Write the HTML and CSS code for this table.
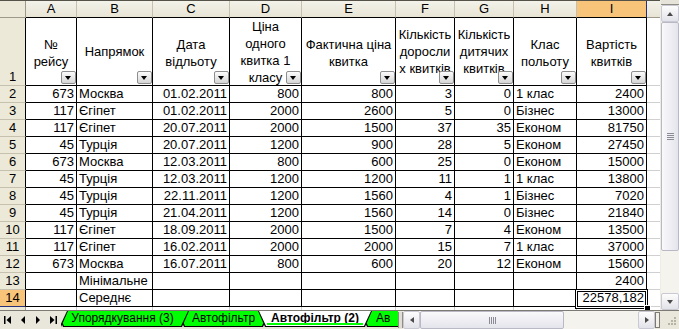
FILE: index.html
```html
<!DOCTYPE html>
<html>
<head>
<meta charset="utf-8">
<link rel="stylesheet" href="styles.css">
</head>
<body>
<div class="app">
  <div class="main">
    <div class="sheet">
      <div class="corner"></div>
      <div class="ch">A</div><div class="ch">B</div><div class="ch">C</div><div class="ch">D</div><div class="ch">E</div><div class="ch">F</div><div class="ch">G</div><div class="ch">H</div><div class="ch sel">I</div><div class="ch chj"></div>

      <div class="rh rh1">1</div>
      <div class="c hd two">№<br>рейсу<i class="dd"></i></div>
      <div class="c hd">Напрямок<i class="dd"></i></div>
      <div class="c hd two">Дата<br>відльоту<i class="dd"></i></div>
      <div class="c hd">Ціна<br>одного<br>квитка 1<br>класу<i class="dd"></i></div>
      <div class="c hd two">Фактична ціна<br>квитка<i class="dd"></i></div>
      <div class="c hd">Кількість<br>доросли<br>х квитків<i class="dd"></i></div>
      <div class="c hd">Кількість<br>дитячих<br>квитків<i class="dd"></i></div>
      <div class="c hd two">Клас<br>польоту<i class="dd"></i></div>
      <div class="c hd two">Вартість<br>квитків<i class="dd"></i></div>
      <div class="j"></div>

      <div class="rh">2</div><div class="c n">673</div><div class="c">Москва</div><div class="c n">01.02.2011</div><div class="c n">800</div><div class="c n">800</div><div class="c n">3</div><div class="c n">0</div><div class="c">1 клас</div><div class="c n">2400</div><div class="j"></div>
      <div class="rh">3</div><div class="c n">117</div><div class="c">Єгіпет</div><div class="c n">01.02.2011</div><div class="c n">2000</div><div class="c n">2600</div><div class="c n">5</div><div class="c n">0</div><div class="c">Бізнес</div><div class="c n">13000</div><div class="j"></div>
      <div class="rh">4</div><div class="c n">117</div><div class="c">Єгіпет</div><div class="c n">20.07.2011</div><div class="c n">2000</div><div class="c n">1500</div><div class="c n">37</div><div class="c n">35</div><div class="c">Економ</div><div class="c n">81750</div><div class="j"></div>
      <div class="rh">5</div><div class="c n">45</div><div class="c">Турція</div><div class="c n">20.07.2011</div><div class="c n">1200</div><div class="c n">900</div><div class="c n">28</div><div class="c n">5</div><div class="c">Економ</div><div class="c n">27450</div><div class="j"></div>
      <div class="rh">6</div><div class="c n">673</div><div class="c">Москва</div><div class="c n">12.03.2011</div><div class="c n">800</div><div class="c n">600</div><div class="c n">25</div><div class="c n">0</div><div class="c">Економ</div><div class="c n">15000</div><div class="j"></div>
      <div class="rh">7</div><div class="c n">45</div><div class="c">Турція</div><div class="c n">12.03.2011</div><div class="c n">1200</div><div class="c n">1200</div><div class="c n">11</div><div class="c n">1</div><div class="c">1 клас</div><div class="c n">13800</div><div class="j"></div>
      <div class="rh">8</div><div class="c n">45</div><div class="c">Турція</div><div class="c n">22.11.2011</div><div class="c n">1200</div><div class="c n">1560</div><div class="c n">4</div><div class="c n">1</div><div class="c">Бізнес</div><div class="c n">7020</div><div class="j"></div>
      <div class="rh">9</div><div class="c n">45</div><div class="c">Турція</div><div class="c n">21.04.2011</div><div class="c n">1200</div><div class="c n">1560</div><div class="c n">14</div><div class="c n">0</div><div class="c">Бізнес</div><div class="c n">21840</div><div class="j"></div>
      <div class="rh">10</div><div class="c n">117</div><div class="c">Єгіпет</div><div class="c n">18.09.2011</div><div class="c n">2000</div><div class="c n">1500</div><div class="c n">7</div><div class="c n">4</div><div class="c">Економ</div><div class="c n">13500</div><div class="j"></div>
      <div class="rh">11</div><div class="c n">117</div><div class="c">Єгіпет</div><div class="c n">16.02.2011</div><div class="c n">2000</div><div class="c n">2000</div><div class="c n">15</div><div class="c n">7</div><div class="c">1 клас</div><div class="c n">37000</div><div class="j"></div>
      <div class="rh">12</div><div class="c n">673</div><div class="c">Москва</div><div class="c n">16.07.2011</div><div class="c n">800</div><div class="c n">600</div><div class="c n">20</div><div class="c n">12</div><div class="c">Економ</div><div class="c n">15600</div><div class="j"></div>
      <div class="rh">13</div><div class="c"></div><div class="c">Мінімальне</div><div class="c"></div><div class="c"></div><div class="c"></div><div class="c"></div><div class="c"></div><div class="c"></div><div class="c n">2400</div><div class="j"></div>
      <div class="rh rsel">14</div><div class="c"></div><div class="c">Середнє</div><div class="c"></div><div class="c"></div><div class="c"></div><div class="c"></div><div class="c"></div><div class="c"></div><div class="c n">22578,182</div><div class="j"></div>

      <div class="rh rh15"></div><div class="g"></div><div class="g"></div><div class="g"></div><div class="g"></div><div class="g"></div><div class="g"></div><div class="g"></div><div class="g"></div><div class="g"></div><div class="g gl"></div>

      <div class="active"><i class="handle"></i></div>
    </div>
    <div class="vscroll">
      <div class="vsplit"></div>
      <div class="sbtn"><i class="ar up"></i></div>
      <div class="vtrack"><div class="vthumb"><i class="grip-h"></i></div></div>
      <div class="sbtn"><i class="ar down"></i></div>
    </div>
  </div>
  <div class="bottom">
    <div class="nav">
      <span class="nb"><svg width="8" height="8" viewBox="0 0 8 8"><rect x="0" y="0" width="1.5" height="8" fill="#000"/><polygon points="7,0 7,8 2.5,4" fill="#000"/></svg></span>
      <span class="nb"><svg width="6" height="8" viewBox="0 0 6 8"><polygon points="5,0 5,8 1,4" fill="#000"/></svg></span>
      <span class="nb"><svg width="6" height="8" viewBox="0 0 6 8"><polygon points="1,0 1,8 5,4" fill="#000"/></svg></span>
      <span class="nb"><svg width="8" height="8" viewBox="0 0 8 8"><polygon points="1,0 1,8 5.5,4" fill="#000"/><rect x="6.5" y="0" width="1.5" height="8" fill="#000"/></svg></span>
    </div>
    <div class="tabs">
      <div class="tab t0"></div>
      <div class="tab t1 green"><span>Упорядкування (3)</span></div>
      <div class="tab t2 green"><span>Автофільтр</span></div>
      <div class="tab t3 act"><span>Автофільтр (2)</span></div>
      <div class="tab t4 green"><span>Ав</span></div>
    </div>
    <div class="hsplit"></div>
    <div class="hscroll">
      <div class="sbtn hb"><i class="ar left"></i></div>
      <div class="hthumb"><i class="grip-v"></i></div>
      <div class="htrack"></div>
      <div class="sbtn hb"><i class="ar right"></i></div>
    </div>
    <div class="hsplit2"></div>
    <div class="sizegrip">
      <svg width="19" height="18" viewBox="0 0 19 18">
        <g fill="#b8b4a4">
          <rect x="14" y="6" width="2" height="2"/>
          <rect x="11" y="9" width="2" height="2"/><rect x="14" y="9" width="2" height="2"/>
          <rect x="8" y="12" width="2" height="2"/><rect x="11" y="12" width="2" height="2"/><rect x="14" y="12" width="2" height="2"/>
        </g>
      </svg>
    </div>
  </div>
</div>
</body>
</html>
```

FILE: styles.css
```css
html, body {
  margin: 0;
  padding: 0;
  background: #fff;
}
body {
  width: 679px;
  height: 329px;
  overflow: hidden;
  font-family: "Liberation Sans", Arial, sans-serif;
  font-size: 13px;
  color: #000;
}
.app {
  display: flex;
  flex-direction: column;
  width: 679px;
  height: 329px;
}
.main {
  display: flex;
  height: 310px;
}
.sheet {
  position: relative;
  width: 660px;
  height: 310px;
  box-sizing: border-box;
  border-top: 1px solid #55524a;
  display: grid;
  grid-template-columns: 26px 51px 76px 77px 72px 94px 59px 59px 63px 70px 13px;
  grid-template-rows: 17px 68px repeat(13, 17px) 3px;
  overflow: hidden;
}
.sheet > div {
  box-sizing: border-box;
  overflow: hidden;
  white-space: nowrap;
}
.corner {
  background: #ECE9D8;
  border-right: 1px solid #9d9a8b;
  border-bottom: 1px solid #9d9a8b;
}
.ch {
  background: linear-gradient(#F3F2EA, #E8E5D5);
  border-right: 1px solid #C5C1AE;
  border-bottom: 1px solid #000;
  text-align: center;
  line-height: 16px;
}
.ch.sel {
  background: #F8C47A;
  border-right: 1px solid #28307a;
}
.ch.chj {
  border-right: none;
  border-bottom-color: #9d9a8b;
}
.rh {
  background: #ECE9D8;
  border-bottom: 1px solid #C5C1AE;
  border-right: 1px solid #000;
  text-align: center;
  line-height: 16px;
}
.rh1 {
  display: flex;
  align-items: flex-end;
  justify-content: center;
}
.rh.rsel {
  background: #F8C47A;
  border-bottom-color: #28307a;
}
.rh.rh15 {
  border-right-color: #9d9a8b;
  border-bottom: none;
}
.c {
  border-right: 1px solid #000;
  border-bottom: 1px solid #000;
  line-height: 16px;
  padding: 0 2px;
}
.n {
  text-align: right;
}
.hd {
  position: relative;
  display: flex;
  align-items: center;
  justify-content: center;
  text-align: center;
  line-height: 17px;
  padding: 0;
}
.hd.two {
  padding-top: 3px;
}
.dd {
  position: absolute;
  right: 0;
  bottom: 1px;
  width: 15px;
  height: 13px;
  box-sizing: border-box;
  border: 1px solid #8e8e8e;
  border-radius: 2px;
  background: linear-gradient(#fbfbfb, #d6d6d6);
}
.dd::after {
  content: "";
  position: absolute;
  left: 3px;
  top: 4px;
  border-left: 3.5px solid transparent;
  border-right: 3.5px solid transparent;
  border-top: 4px solid #000;
}
.j {
  border-bottom: 1px solid #d0d0d0;
}
.g {
  border-right: 1px solid #d0d0d0;
}
.g.gl {
  border-right: none;
}
.active {
  position: absolute;
  left: 575px;
  top: 288px;
  width: 73px;
  height: 20px;
  box-sizing: border-box;
  border: 1px solid #000;
  box-shadow: inset 0 0 0 1px #fff, inset 0 0 0 2px #000;
  overflow: visible !important;
}
.handle {
  position: absolute;
  right: -3px;
  bottom: -3px;
  width: 5px;
  height: 5px;
  background: #000;
  box-shadow: 0 0 0 1px #fff;
}

/* vertical scrollbar */
.vscroll {
  width: 19px;
  height: 310px;
  display: flex;
  flex-direction: column;
  background: #F4F3EE;
  box-sizing: border-box;
  border-left: 1px solid #eeede5;
}
.vsplit {
  height: 4px;
  background: #e6e4da;
  border-bottom: 1px solid #8f8d84;
}
.sbtn {
  position: relative;
  height: 17px;
  box-sizing: border-box;
  border: 1px solid #c9c9d4;
  border-radius: 2px;
  background: linear-gradient(#fdfdfd, #e2e2ea);
  display: flex;
  align-items: center;
  justify-content: center;
  flex: none;
}
.vtrack {
  flex: 1;
  padding-top: 2px;
}
.vthumb {
  height: 229px;
  box-sizing: border-box;
  border: 1px solid #b9b9c6;
  border-radius: 2px;
  background: linear-gradient(90deg, #f9f9fb, #e4e4ec);
  display: flex;
  align-items: center;
  justify-content: center;
  margin-top: -2px;
}
.grip-h {
  width: 7px;
  height: 7px;
  background: repeating-linear-gradient(#8b8b95 0 1px, transparent 1px 2px);
}
.ar {
  width: 0;
  height: 0;
}
.ar.up {
  border-left: 3.5px solid transparent;
  border-right: 3.5px solid transparent;
  border-bottom: 4px solid #4a4a4a;
}
.ar.down {
  border-left: 3.5px solid transparent;
  border-right: 3.5px solid transparent;
  border-top: 4px solid #4a4a4a;
}
.ar.left {
  border-top: 3.5px solid transparent;
  border-bottom: 3.5px solid transparent;
  border-right: 4px solid #4a4a4a;
}
.ar.right {
  border-top: 3.5px solid transparent;
  border-bottom: 3.5px solid transparent;
  border-left: 4px solid #4a4a4a;
}

/* bottom bar */
.bottom {
  display: flex;
  height: 19px;
  box-sizing: border-box;
  border-top: 1px solid #7c7a72;
  background: #E9E7DC;
}
.nav {
  width: 61px;
  display: flex;
  flex: none;
  align-items: center;
}
.nb {
  width: 15px;
  display: flex;
  align-items: center;
  justify-content: center;
}
.tabs {
  width: 337px;
  flex: none;
  display: flex;
  overflow: hidden;
  height: 17px;
}
.tab {
  position: relative;
  flex: none;
  height: 16px;
  line-height: 15px;
  font-size: 12px;
  text-align: center;
  background: #000;
  clip-path: polygon(0 0, 100% 0, calc(100% - 7px) 100%, 7px 100%);
}
.tab + .tab {
  margin-left: -12px;
}
.tab::before {
  content: "";
  position: absolute;
  left: 1px;
  right: 1px;
  top: 0;
  bottom: 1px;
  background: #E9E7DC;
  clip-path: polygon(0 0, 100% 0, calc(100% - 7px) 100%, 7px 100%);
}
.tab span {
  position: relative;
}
.tab.green::before {
  background: #00FF00;
}
.t0 {
  width: 40px;
  margin-left: -33px;
  z-index: 4;
}
.t1 {
  width: 133px;
  z-index: 3;
}
.t2 {
  width: 93px;
  z-index: 2;
}
.t3 {
  width: 114px;
  z-index: 5;
  font-weight: bold;
}
.t3::before {
  background: #fff;
}
.t3::after {
  content: "";
  position: absolute;
  left: 9px;
  right: 9px;
  bottom: 2px;
  height: 2px;
  background: #00FF00;
}
.t4 {
  width: 70px;
  z-index: 1;
  text-align: left;
  padding-left: 16px;
  box-sizing: border-box;
}
.hsplit {
  width: 5px;
  flex: none;
  box-sizing: border-box;
  margin: 1px 0;
  border-left: 1px solid #8f8d84;
  border-right: 1px solid #8f8d84;
  background: #e0ded4;
}
.hscroll {
  width: 252px;
  flex: none;
  display: flex;
  background: #F4F3EE;
}
.sbtn.hb {
  width: 17px;
  height: 18px;
}
.hthumb {
  width: 144px;
  flex: none;
  box-sizing: border-box;
  border: 1px solid #b9b9c6;
  border-radius: 2px;
  background: linear-gradient(#f9f9fb, #e4e4ec);
  display: flex;
  align-items: center;
  justify-content: center;
}
.grip-v {
  width: 7px;
  height: 7px;
  background: repeating-linear-gradient(90deg, #8b8b95 0 1px, transparent 1px 2px);
}
.htrack {
  flex: 1;
}
.hsplit2 {
  width: 5px;
  flex: none;
  box-sizing: border-box;
  margin: 1px 0;
  border: 1px solid #7c7a72;
  background: #f0efe8;
}
.sizegrip {
  flex: 1;
  display: flex;
  align-items: flex-end;
  justify-content: flex-end;
}
```
